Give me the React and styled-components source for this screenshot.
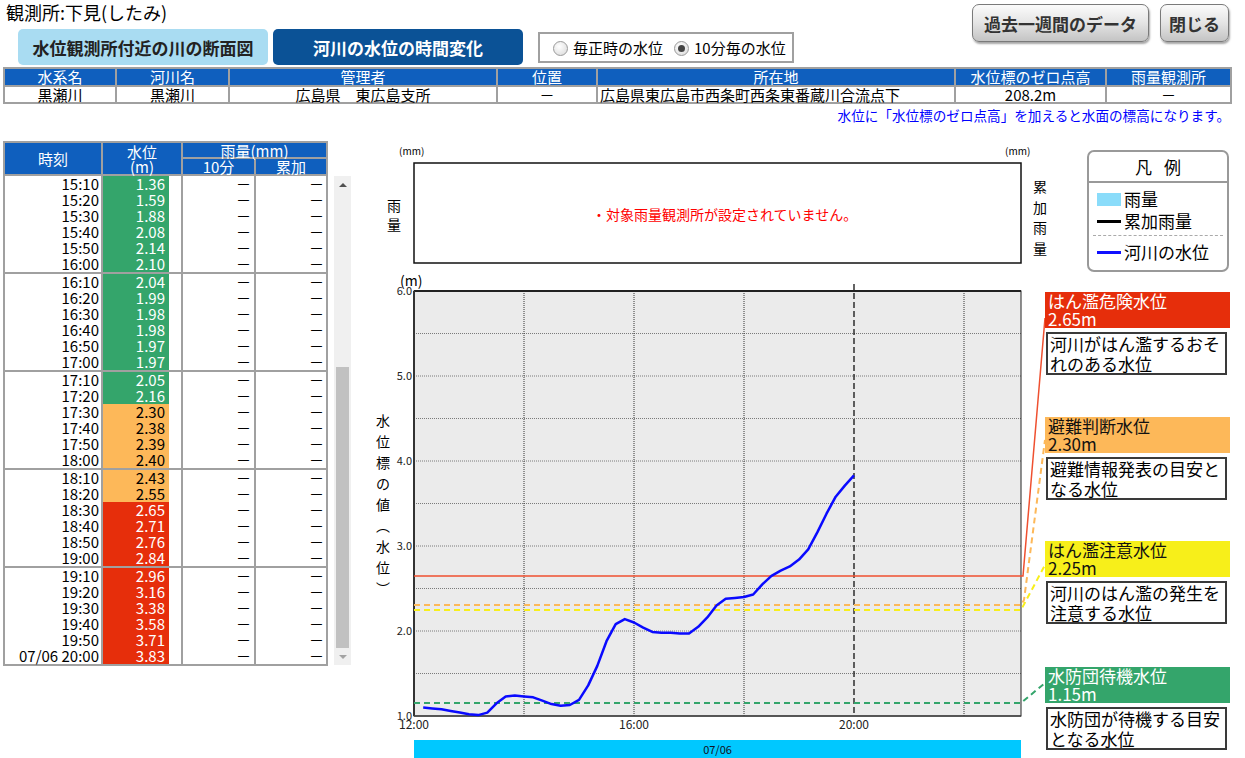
import React from 'react';
import styled, { createGlobalStyle } from 'styled-components';

const FONT = `"Noto Sans CJK JP", "Noto Sans", sans-serif`;

const GlobalStyle = createGlobalStyle`
  html, body { margin: 0; padding: 0; background: #fff; }
  body { font-family: ${FONT}; color: #000; width: 1245px; height: 758px; overflow: hidden; }
  * { box-sizing: border-box; }
`;

const Page = styled.div`
  width: 1245px;
  height: 758px;
  overflow: hidden;
`;

const TopBar = styled.div`
  display: flex;
  justify-content: space-between;
  height: 65px;
`;

const Title = styled.div`
  height: 26px;
  padding: 1px 0 0 6px;
  font-size: 18px;
  line-height: 22px;
`;

const TabRow = styled.div`
  display: flex;
  align-items: center;
  gap: 5px;
  margin-top: 3px;
  padding-left: 18px;
`;

const Tab = styled.div`
  width: 250px;
  height: 36px;
  flex: none;
  border-radius: 5px;
  background: ${(p) => (p.$active ? '#0b5296' : '#a9dcf2')};
  color: ${(p) => (p.$active ? '#fff' : '#222')};
  font-size: 17px;
  font-weight: bold;
  display: flex;
  align-items: center;
  justify-content: center;
`;

const RadioBox = styled.div`
  margin-left: 10px;
  width: 256px;
  height: 31px;
  flex: none;
  border: 2px solid #a0a0a0;
  display: flex;
  align-items: center;
  padding: 2px 0 0 13px;
  font-size: 15px;
  white-space: nowrap;
`;

const RadioItem = styled.label`
  display: flex;
  flex: none;
  align-items: center;
  gap: 5px;
  margin-right: 11px;
  line-height: 16px;
`;

const RadioDot = styled.span`
  width: 15px;
  height: 15px;
  flex: none;
  border-radius: 50%;
  border: 1px solid #9a9a9a;
  background: radial-gradient(circle at 40% 35%, #fff, #d8d8d8);
  display: flex;
  align-items: center;
  justify-content: center;
  &::after {
    content: '';
    width: 7px;
    height: 7px;
    border-radius: 50%;
    background: ${(p) => (p.$checked ? '#444' : 'transparent')};
  }
`;

const ButtonRow = styled.div`
  display: flex;
  gap: 11px;
  padding: 4px 16px 0 0;
`;

const GrayButton = styled.button`
  width: ${(p) => p.$w}px;
  height: 38px;
  padding: 0;
  border: 1px solid #7a7a7a;
  border-radius: 7px;
  background: linear-gradient(#fbfbfb, #e4e4e4 50%, #c4c4c4);
  box-shadow: 1px 2px 2px rgba(0, 0, 0, 0.35);
  font-family: ${FONT};
  font-size: 17px;
  font-weight: bold;
  color: #333;
  cursor: pointer;
`;

const InfoGrid = styled.div`
  margin: 2px 0 0 3px;
  width: 1229px;
  display: grid;
  grid-template-columns: 110px 111px 266px 98px 356px 149px 123px;
  gap: 2px;
  padding: 2px;
  background: #a0a0a0;
`;

const InfoHead = styled.div`
  height: 16px;
  background: #0f5fbe;
  color: #fff;
  font-size: 15px;
  line-height: 16px;
  text-align: center;
`;

const InfoCell = styled.div`
  height: 15px;
  background: #fff;
  font-size: 15px;
  line-height: 15px;
  text-align: ${(p) => p.$align || 'center'};
  padding-left: ${(p) => (p.$align === 'left' ? '2px' : '0')};
  white-space: nowrap;
`;

const Note = styled.div`
  margin-top: 3px;
  height: 17px;
  padding-right: 15px;
  text-align: right;
  color: #0000ff;
  font-size: 13.6px;
  line-height: 17px;
`;

const Body = styled.div`
  display: flex;
  margin-top: 17px;
  height: 617px;
`;

const LeftPane = styled.div`
  display: flex;
  margin-left: 3px;
  align-items: flex-start;
`;

const DataTable = styled.div`
  width: 325px;
  display: flex;
  flex-direction: column;
  gap: 2px;
  padding: 2px;
  background: #a0a0a0;
`;

const HeadGrid = styled.div`
  display: grid;
  grid-template-columns: 96px 78px 71px 70px;
  grid-template-rows: 14px 15px;
  gap: 2px;
`;

const THead = styled.div`
  grid-row: ${(p) => p.$row || 'auto'};
  grid-column: ${(p) => p.$col || 'auto'};
  background: #0f5fbe;
  color: #fff;
  font-size: 15px;
  line-height: 15px;
  text-align: center;
  display: flex;
  flex-direction: column;
  justify-content: center;
`;

const Group = styled.div`
  display: grid;
  grid-template-columns: 96px 78px 71px 70px;
  column-gap: 2px;
`;

const Cell = styled.div`
  height: 16px;
  background: #fff;
  font-size: 15px;
  line-height: 16px;
  text-align: right;
  padding-right: ${(p) => p.$pr || 0}px;
  white-space: nowrap;
`;

const LevelBar = styled.div`
  width: 66px;
  height: 16px;
  background: ${(p) => p.$bg};
  color: ${(p) => p.$fg};
  text-align: right;
  padding-right: 4px;
`;

const ScrollBar = styled.div`
  margin: 35px 0 0 6px;
  width: 17px;
  height: 489px;
  background: #f0f0f0;
  display: flex;
  flex-direction: column;
  align-items: center;
`;

const Arrow = styled.div`
  height: 17px;
  width: 17px;
  display: flex;
  align-items: center;
  justify-content: center;
  &::after {
    content: '';
    border-left: 4px solid transparent;
    border-right: 4px solid transparent;
    ${(p) => (p.$down ? 'border-top: 4px solid #a3a3a3;' : 'border-bottom: 4px solid #505050;')}
  }
`;

const Spacer = styled.div`
  flex: 1;
`;

const Thumb = styled.div`
  width: 13px;
  height: 281px;
  background: #c1c1c1;
`;

const ChartSvg = styled.svg`
  margin-left: 19px;
  flex: none;
  font-family: ${FONT};
`;

const RightPane = styled.div`
  width: 186px;
  margin-left: -8px;
  display: flex;
  flex-direction: column;
`;

const Legend = styled.div`
  margin: 9px 0 0 42px;
  width: 142px;
  height: 122px;
  border: 2px solid #999;
  border-radius: 7px;
  font-size: 17px;
  line-height: 22px;
`;

const LegendHead = styled.div`
  height: 31px;
  border-bottom: 2px solid #999;
  text-align: center;
  line-height: 29px;
  letter-spacing: 12px;
  padding-left: 12px;
`;

const LegendItem = styled.div`
  display: flex;
  align-items: center;
  height: 22px;
  padding-left: 8px;
  margin-top: ${(p) => p.$mt || 0}px;
`;

const Swatch = styled.span`
  width: 24px;
  height: ${(p) => p.$h}px;
  background: ${(p) => p.$c};
  margin-right: 3px;
`;

const LegendSep = styled.div`
  margin: 3px 4px 0;
  border-top: 1px dashed #aaa;
`;

const LevelBlock = styled.div`
  margin-top: ${(p) => p.$mt}px;
`;

const LevelHead = styled.div`
  width: 185px;
  height: 36px;
  padding-left: 3px;
  background: ${(p) => p.$bg};
  color: ${(p) => p.$fg};
  font-size: 17px;
  line-height: 18px;
  white-space: nowrap;
`;

const LevelDesc = styled.div`
  margin: 4px 0 0 1px;
  width: 181px;
  height: 43px;
  border: 2px solid #3a3a3a;
  padding: 0 2px;
  font-size: 17px;
  line-height: 19.5px;
  white-space: nowrap;
`;

const GREEN = '#34a56b';
const ORANGE = '#fdb859';
const YELLOW = '#f7ef1a';
const RED = '#e62e0b';

const tableRows = [
  ['15:10', 1.36], ['15:20', 1.59], ['15:30', 1.88], ['15:40', 2.08], ['15:50', 2.14], ['16:00', 2.10],
  ['16:10', 2.04], ['16:20', 1.99], ['16:30', 1.98], ['16:40', 1.98], ['16:50', 1.97], ['17:00', 1.97],
  ['17:10', 2.05], ['17:20', 2.16], ['17:30', 2.30], ['17:40', 2.38], ['17:50', 2.39], ['18:00', 2.40],
  ['18:10', 2.43], ['18:20', 2.55], ['18:30', 2.65], ['18:40', 2.71], ['18:50', 2.76], ['19:00', 2.84],
  ['19:10', 2.96], ['19:20', 3.16], ['19:30', 3.38], ['19:40', 3.58], ['19:50', 3.71], ['07/06 20:00', 3.83],
];

const earlyLevels = [
  1.10, 1.09, 1.08, 1.06, 1.04, 1.02, 1.01, 1.04, 1.15, 1.23, 1.24, 1.23,
  1.22, 1.18, 1.14, 1.12, 1.13, 1.19,
];

const levelColor = (v) => {
  if (v >= 2.65) return [RED, '#fff'];
  if (v >= 2.3) return [ORANGE, '#000'];
  return [GREEN, '#fff'];
};

// chart geometry, in page coordinates
const X0 = 414;
const X1 = 1021;
const YT = 291;
const YB = 716;
const xAt = (min) => X0 + (min * 55) / 60;
const yAt = (v) => YB - (v - 1) * 85;

const allLevels = [...earlyLevels, ...tableRows.map((r) => r[1])];
const curve = allLevels
  .map((v, i) => `${xAt((i + 1) * 10).toFixed(1)},${yAt(v).toFixed(1)}`)
  .join(' ');

const vTitle = ['水', '位', '標', 'の', '値', '︵', '水', '位', '︶'];

const Chart = () => (
  <ChartSvg width="683" height="617" viewBox="370 141 683 617">
    <text x="399" y="155" fontSize="10">(mm)</text>
    <text x="1005" y="155" fontSize="10">(mm)</text>
    <rect x={X0} y="163" width={X1 - X0} height="100" fill="#fff" stroke="#111" strokeWidth="1.5" />
    <text x="394" y="211" fontSize="14" textAnchor="middle">雨</text>
    <text x="394" y="230" fontSize="14" textAnchor="middle">量</text>
    {['累', '加', '雨', '量'].map((c, i) => (
      <text key={i} x="1040" y={192 + i * 20.5} fontSize="14" textAnchor="middle">{c}</text>
    ))}
    <text x="592" y="220" fontSize="14" fill="#ff0000">・対象雨量観測所が設定されていません。</text>

    <text x="400" y="286" fontSize="14">(m)</text>
    <rect x={X0} y={YT} width={X1 - X0} height={YB - YT} fill="#ebebeb" />
    {[1, 2, 3, 4, 5, 6, 7, 8, 9].map((k) => (
      <line key={k} x1={X0} x2={X1} y1={YB - k * 42.5} y2={YB - k * 42.5} stroke="#7a7a7a" strokeDasharray="1 1" />
    ))}
    {[120, 240, 360, 600].map((m) => (
      <line key={m} x1={xAt(m)} x2={xAt(m)} y1={YT} y2={YB} stroke="#333" strokeDasharray="1 1" />
    ))}
    <line x1={xAt(480)} x2={xAt(480)} y1="284" y2={YB} stroke="#111" strokeWidth="1.3" strokeDasharray="6 3" />
    <rect x={X0} y={YT} width={X1 - X0} height={YB - YT} fill="none" stroke="#222" strokeWidth="1" />
    <line x1={X0} x2={X1} y1={YT} y2={YT} stroke="#222" strokeWidth="2" />
    <line x1={X0} x2={X0} y1={YT} y2={YB} stroke="#333" strokeWidth="2" />
    <line x1={X0} x2={X1} y1={YB} y2={YB} stroke="#444" strokeWidth="1.5" />

    {['6.0', '5.0', '4.0', '3.0', '2.0', '1.0'].map((t, i) => (
      <text key={t} x="412" y={295 + i * 85} fontSize="11" textAnchor="end" fill="#222">
        {t}
      </text>
    ))}
    {vTitle.map((c, i) => (
      <text key={i} x="383" y={426 + i * 21} fontSize="14" textAnchor="middle">{c}</text>
    ))}
    {[['12:00', 0], ['16:00', 240], ['20:00', 480]].map(([t, m]) => (
      <text key={t} x={xAt(m)} y="729" fontSize="12" textAnchor="middle" fill="#222">{t}</text>
    ))}

    <polyline points={`${X0},576 ${X1},576 1023,576 1045,318`} fill="none" stroke="#ef5030" strokeWidth="1.5" />
    <polyline points={`${X0},605 ${X1},605 1024,600 1045,440`} fill="none" stroke={ORANGE} strokeWidth="2" strokeDasharray="6 4" />
    <polyline points={`${X0},610 ${X1},610 1045,565`} fill="none" stroke={YELLOW} strokeWidth="2" strokeDasharray="6 4" />
    <polyline points={`${X0},703 ${X1},703 1045,683`} fill="none" stroke={GREEN} strokeWidth="2" strokeDasharray="6 4" />

    <polyline points={curve} fill="none" stroke="#0a0aff" strokeWidth="2.5" strokeLinejoin="round" />

    <rect x={X0} y="740" width={X1 - X0} height="18" fill="#00c8ff" />
    <text x={(X0 + X1) / 2} y="754" fontSize="11" textAnchor="middle" fill="#112">07/06</text>
  </ChartSvg>
);

const levels = [
  { mt: 20, bg: RED, fg: '#fff', name: 'はん濫危険水位', val: '2.65m', d1: '河川がはん濫するおそ', d2: 'れのある水位' },
  { mt: 42, bg: ORANGE, fg: '#111', name: '避難判断水位', val: '2.30m', d1: '避難情報発表の目安と', d2: 'なる水位' },
  { mt: 41, bg: YELLOW, fg: '#111', name: 'はん濫注意水位', val: '2.25m', d1: '河川のはん濫の発生を', d2: '注意する水位' },
  { mt: 43, bg: GREEN, fg: '#fff', name: '水防団待機水位', val: '1.15m', d1: '水防団が待機する目安', d2: 'となる水位' },
];

const groups = [0, 1, 2, 3, 4].map((g) => tableRows.slice(g * 6, g * 6 + 6));

const App = () => (
  <Page>
    <GlobalStyle />
    <TopBar>
      <div>
        <Title>観測所:下見(したみ)</Title>
        <TabRow>
          <Tab>水位観測所付近の川の断面図</Tab>
          <Tab $active>河川の水位の時間変化</Tab>
          <RadioBox>
            <RadioItem>
              <RadioDot />
              毎正時の水位
            </RadioItem>
            <RadioItem>
              <RadioDot $checked />
              10分毎の水位
            </RadioItem>
          </RadioBox>
        </TabRow>
      </div>
      <ButtonRow>
        <GrayButton $w={177}>過去一週間のデータ</GrayButton>
        <GrayButton $w={69}>閉じる</GrayButton>
      </ButtonRow>
    </TopBar>

    <InfoGrid>
      {['水系名', '河川名', '管理者', '位置', '所在地', '水位標のゼロ点高', '雨量観測所'].map((h) => (
        <InfoHead key={h}>{h}</InfoHead>
      ))}
      <InfoCell>黒瀬川</InfoCell>
      <InfoCell>黒瀬川</InfoCell>
      <InfoCell>広島県　東広島支所</InfoCell>
      <InfoCell>－</InfoCell>
      <InfoCell $align="left">広島県東広島市西条町西条東番蔵川合流点下</InfoCell>
      <InfoCell>208.2m</InfoCell>
      <InfoCell>－</InfoCell>
    </InfoGrid>
    <Note>水位に「水位標のゼロ点高」を加えると水面の標高になります。</Note>

    <Body>
      <LeftPane>
        <DataTable>
          <HeadGrid>
            <THead $row="1 / 3">時刻</THead>
            <THead $row="1 / 3">
              <span>水位</span>
              <span>(m)</span>
            </THead>
            <THead $col="3 / 5">雨量(mm)</THead>
            <THead>10分</THead>
            <THead>累加</THead>
          </HeadGrid>
          {groups.map((rows, gi) => (
            <Group key={gi}>
              {rows.map(([t, v]) => {
                const [bg, fg] = levelColor(v);
                return (
                  <React.Fragment key={t}>
                    <Cell $pr={2}>{t}</Cell>
                    <Cell>
                      <LevelBar $bg={bg} $fg={fg}>{v.toFixed(2)}</LevelBar>
                    </Cell>
                    <Cell $pr={3}>－</Cell>
                    <Cell $pr={2}>－</Cell>
                  </React.Fragment>
                );
              })}
            </Group>
          ))}
        </DataTable>
        <ScrollBar>
          <Arrow />
          <Spacer />
          <Thumb />
          <Arrow $down />
        </ScrollBar>
      </LeftPane>

      <Chart />

      <RightPane>
        <Legend>
          <LegendHead>凡例</LegendHead>
          <LegendItem $mt={5}>
            <Swatch $c="#8adcfa" $h={13} />
            雨量
          </LegendItem>
          <LegendItem>
            <Swatch $c="#000" $h={3} />
            累加雨量
          </LegendItem>
          <LegendSep />
          <LegendItem $mt={5}>
            <Swatch $c="#1010ff" $h={3} />
            河川の水位
          </LegendItem>
        </Legend>
        {levels.map((l) => (
          <LevelBlock key={l.name} $mt={l.mt}>
            <LevelHead $bg={l.bg} $fg={l.fg}>
              {l.name}
              <br />
              {l.val}
            </LevelHead>
            <LevelDesc>
              {l.d1}
              <br />
              {l.d2}
            </LevelDesc>
          </LevelBlock>
        ))}
      </RightPane>
    </Body>
  </Page>
);

export default App;
